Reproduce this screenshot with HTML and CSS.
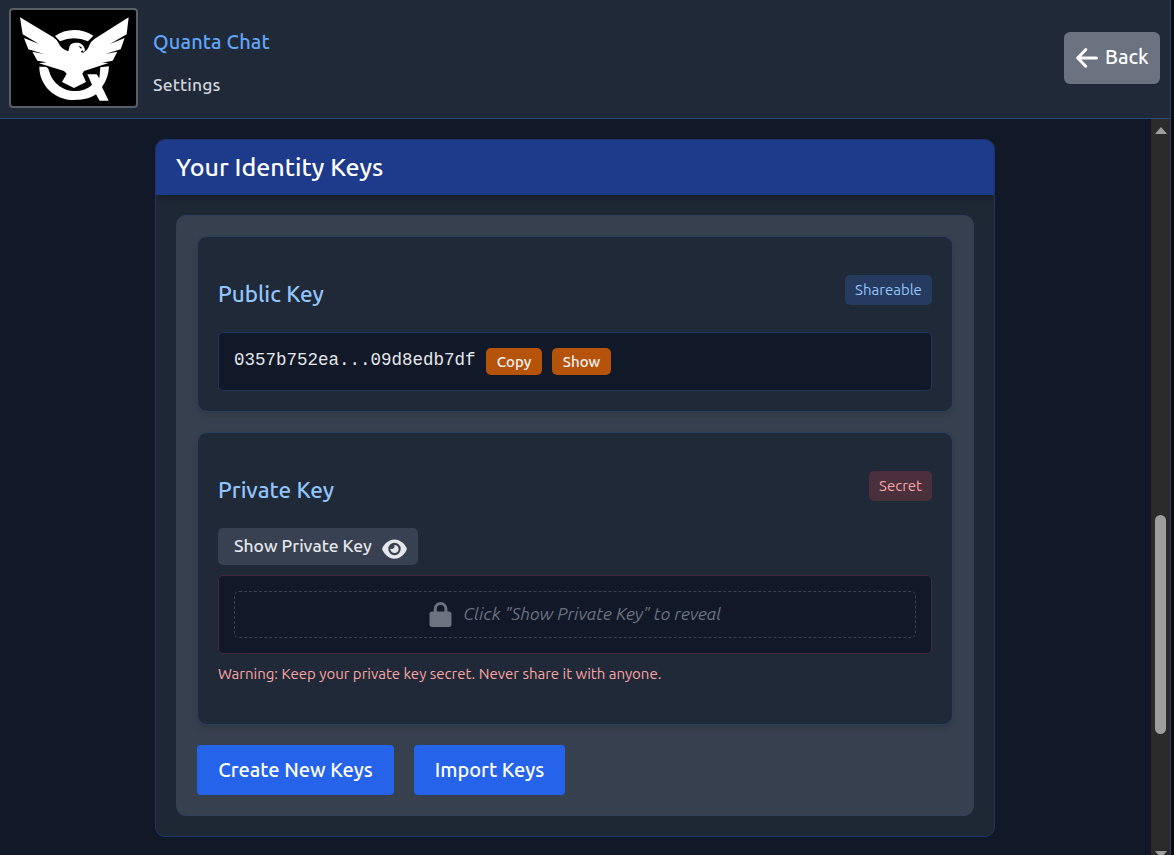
FILE: index.html
```html
<!DOCTYPE html>
<html lang="en">
<head>
<meta charset="utf-8">
<title>Quanta Chat - Settings</title>
<link rel="stylesheet" href="styles.css">
</head>
<body>
<div class="app">
  <header class="topbar">
    <div class="logo">
      <svg viewBox="33 30 375 288" preserveAspectRatio="none" fill="#fff">
        <path d="M165 108Q190 90 222 90Q255 90 280 107L264 124Q222 106 180 124Z"/>
        <path d="M60 52L160 112Q172 120 176 130Q184 148 205 154L207 146Q208 129 226 128L236 128Q252 132 255 151L251 156L247 151L242 156L250 158Q264 150 268 136Q272 124 284 116L386 52L380 103L330 132L374 114L362 148L316 162L352 155L338 182L306 188L326 189L252 213L247 221L258 246L222 264L186 246L200 221L192 213L117 190L140 187L112 182L97 155L132 162L85 148L72 114L117 132L68 103Z"/>
        <path d="M118 200L136 200Q145 202 147 212C156 250 192 273 222 273C246 273 264 266 276 254L262 223L290 223L298 235L301 202L327 199Q326 234 306 261L326 302H299L288 283C270 296 246 300 222 300C162 300 118 255 118 200Z"/>
        <path d="M235 138L245 141L244 147Z" fill="#000"/>
      </svg>
    </div>
    <div class="titles">
      <h1 class="app-name">Quanta Chat</h1>
      <p class="page-name">Settings</p>
    </div>
    <button class="back">
      <svg class="back-icon" viewBox="0 0 22 20" fill="none" stroke="#fff" stroke-width="3" stroke-linecap="round" stroke-linejoin="round"><path d="M9.7 1.7L1.7 10L9.7 18.2M2 10H20.4"/></svg>
      <span class="back-label">Back</span>
    </button>
  </header>

  <div class="body">
    <main class="content">
      <section class="panel">
        <h2 class="panel-title">Your Identity Keys</h2>
        <div class="keys">
          <article class="card">
            <div class="card-head">
              <h3 class="card-title public-title">Public Key</h3>
              <span class="tag tag-blue">Shareable</span>
            </div>
            <div class="key-box">
              <code class="key-value">0357b752ea...09d8edb7df</code>
              <button class="mini copy">Copy</button>
              <button class="mini show">Show</button>
            </div>
          </article>

          <article class="card card-private">
            <div class="card-head">
              <h3 class="card-title private-title">Private Key</h3>
              <span class="tag tag-red">Secret</span>
            </div>
            <button class="reveal">
              <span class="reveal-label">Show Private Key</span>
              <svg class="eye" viewBox="0 0 576 512" fill="#e5e7eb"><path d="M288 32c-80.800 0-145.500 36.800-192.600 80.600C48.600 156 17.300 208 2.500 243.700c-3.300 7.900-3.300 16.700 0 24.600C17.300 304 48.600 356 95.400 399.400C142.500 443.200 207.200 480 288 480s145.500-36.800 192.600-80.600c46.800-43.500 78.100-95.400 93-131.100c3.300-7.900 3.300-16.700 0-24.600c-14.900-35.700-46.200-87.700-93-131.100C433.500 68.800 368.800 32 288 32zM144 256a144 144 0 1 1 288 0a144 144 0 1 1-288 0zm144-64c0 35.300-28.700 64-64 64c-7.100 0-13.900-1.200-20.300-3.300c-5.500-1.800-11.900 1.600-11.700 7.400c.3 6.900 1.300 13.800 3.200 20.700c13.700 51.200 66.400 81.600 117.600 67.900s81.600-66.400 67.900-117.600c-11.100-41.500-47.800-69.400-88.600-71.100c-5.800-.2-9.200 6.100-7.400 11.700c2.100 6.400 3.300 13.200 3.300 20.300z"/></svg>
            </button>
            <div class="secret-box">
              <div class="hidden-key">
                <svg class="lock" viewBox="0 0 22 25"><rect y="9.500" width="22" height="15.500" rx="2.700" fill="#6b7280"/><path d="M5.800 10V6.800a5.300 5.300 0 0 1 10.600 0V10" fill="none" stroke="#6b7280" stroke-width="3"/></svg>
                <em class="hint">Click "Show Private Key" to reveal</em>
              </div>
            </div>
            <p class="warning">Warning: Keep your private key secret. Never share it with anyone.</p>
          </article>

          <div class="actions">
            <button class="primary create">Create New Keys</button>
            <button class="primary import">Import Keys</button>
          </div>
        </div>
      </section>
    </main>
    <div class="scrollbar">
      <i class="arrow-up"></i>
      <i class="thumb"></i>
      <i class="arrow-down"></i>
    </div>
  </div>
</div>
</body>
</html>
```
FILE: styles.css
```css
* { box-sizing: border-box; }
body {
  margin: 0;
  height: 855px;
  overflow: hidden;
  background: #0b0c0f;
  color: #fff;
  font-family: Ubuntu, "Noto Sans", sans-serif;
  font-size: 20px;
}
h1, h2, h3, p { margin: 0; font-weight: 400; white-space: nowrap; }
button { border: 0; margin: 0; padding: 0; color: #fff; font-family: inherit; white-space: nowrap; }
svg { display: block; flex: none; }
.app {
  display: flex;
  flex-direction: column;
  width: 1171px;
  height: 855px;
  border-right: 1px solid #233f6a;
  background: #111827;
}
.topbar {
  display: flex;
  flex: none;
  height: 119px;
  padding: 8px 10px 0 9px;
  border-bottom: 1px solid #2b4a7c;
  background: #1f2937;
}
.logo {
  width: 129px;
  height: 100px;
  border: 2px solid #566069;
  border-radius: 4px;
  background: #000;
  overflow: hidden;
}
.logo svg { width: 125px; height: 96px; }
.titles { flex: 1; padding: 20px 0 0 15px; }
.app-name { font-size: 20px; line-height: 28px; font-weight: 500; color: #60a5fa; letter-spacing: .15px; }
.page-name { margin-top: 16px; font-size: 17.500px; line-height: 26px; font-weight: 500; color: #d1d5db; letter-spacing: .15px; }
.back {
  display: flex;
  align-items: center;
  width: 96px;
  height: 52px;
  margin-top: 24px;
  padding-left: 12px;
  border-radius: 6px;
  background: #6b7280;
}
.back-icon { width: 22px; height: 20px; }
.back-label { margin: -2px 0 0 7px; font-size: 20px; font-weight: 500; line-height: 28px; }
.body { display: flex; flex: 1; min-height: 0; }
.content { flex: 1; padding: 20px 156px 0 155px; }
.panel {
  height: 698px;
  border: 1px solid #1e3569;
  border-radius: 10px;
  background: #1e2734;
  overflow: hidden;
}
.panel-title {
  height: 55px;
  padding-left: 20px;
  background: #1e3a8a;
  box-shadow: 0 4px 6px rgba(0, 0, 0, .18);
  font-size: 25px;
  font-weight: 500;
  line-height: 55px;
}
.keys {
  height: 601px;
  margin: 20px;
  padding: 20px;
  border: 1px solid #303f5c;
  border-radius: 10px;
  background: #37404e;
}
.card {
  height: 176px;
  padding: 20px;
  border: 1px solid #29405f;
  border-radius: 10px;
  background: #1f2937;
  box-shadow: 0 4px 6px rgba(0, 0, 0, .12);
}
.card-private { height: 293px; margin-top: 20px; }
.card-head { display: flex; justify-content: space-between; height: 75px; padding-top: 18px; }
.card-title { padding-top: 3px; font-size: 22.500px; font-weight: 500; line-height: 32px; color: #93c5fd; }
.tag { height: 30px; border-radius: 5px; font-size: 15px; line-height: 29px; text-align: center; }
.tag-blue { width: 87px; background: #253b5f; color: #93c5fd; }
.tag-red { width: 63px; background: #4a303c; color: #fca5a5; }
.key-box {
  display: flex;
  height: 59px;
  padding: 15px;
  border: 1px solid #20355b;
  border-radius: 5px;
  background: #111827;
}
.key-value { width: 252px; font: 17.500px/24px "Liberation Mono", monospace; color: #e5e7eb; white-space: nowrap; }
.mini { height: 27px; border-radius: 5px; background: #b45309; color: #f3f4f6; font-size: 15px; font-weight: 500; line-height: 27px; }
.copy { width: 56px; }
.show { width: 59px; margin-left: 10px; }
.reveal {
  display: flex;
  width: 200px;
  height: 37px;
  padding-left: 16px;
  border-radius: 5px;
  background: #374151;
}
.reveal-label { width: 148px; text-align: left; font-size: 17.500px; font-weight: 500; line-height: 35px; color: #e5e7eb; }
.eye { width: 25px; height: 22px; margin-top: 10px; }
.secret-box {
  height: 79px;
  margin-top: 10px;
  padding: 15px;
  border: 1px solid #43293a;
  border-radius: 5px;
  background: #111827;
}
.hidden-key {
  display: flex;
  justify-content: center;
  height: 47px;
  border: 1px dashed #374151;
  border-radius: 5px;
}
.lock { width: 23px; height: 25px; margin-top: 10px; }
.hint { margin-left: 11.500px; font-size: 17.500px; line-height: 44px; color: #6b7280; white-space: nowrap; }
.warning { margin-top: 8px; font-size: 15px; line-height: 24px; color: #fca5a5; }
.actions { display: flex; gap: 20px; margin-top: 20px; }
.primary { height: 50px; border-radius: 4px; background: #2563eb; font-size: 20px; font-weight: 500; line-height: 50px; }
.create { width: 197px; }
.import { width: 151px; }
.scrollbar {
  display: flex;
  flex-direction: column;
  align-items: center;
  width: 19px;
  padding-top: 8px;
  background: #2b2b2b;
  overflow: hidden;
}
.arrow-up, .arrow-down { flex: none; border: 6.500px solid transparent; }
.arrow-up { border-top: 0; border-bottom: 7px solid #9e9e9e; }
.thumb { flex: none; width: 11px; height: 219px; margin-top: 381px; border-radius: 6px; background: #9e9e9e; }
.arrow-down { margin-top: 117px; border-bottom: 0; border-top: 7px solid #9e9e9e; }
```
